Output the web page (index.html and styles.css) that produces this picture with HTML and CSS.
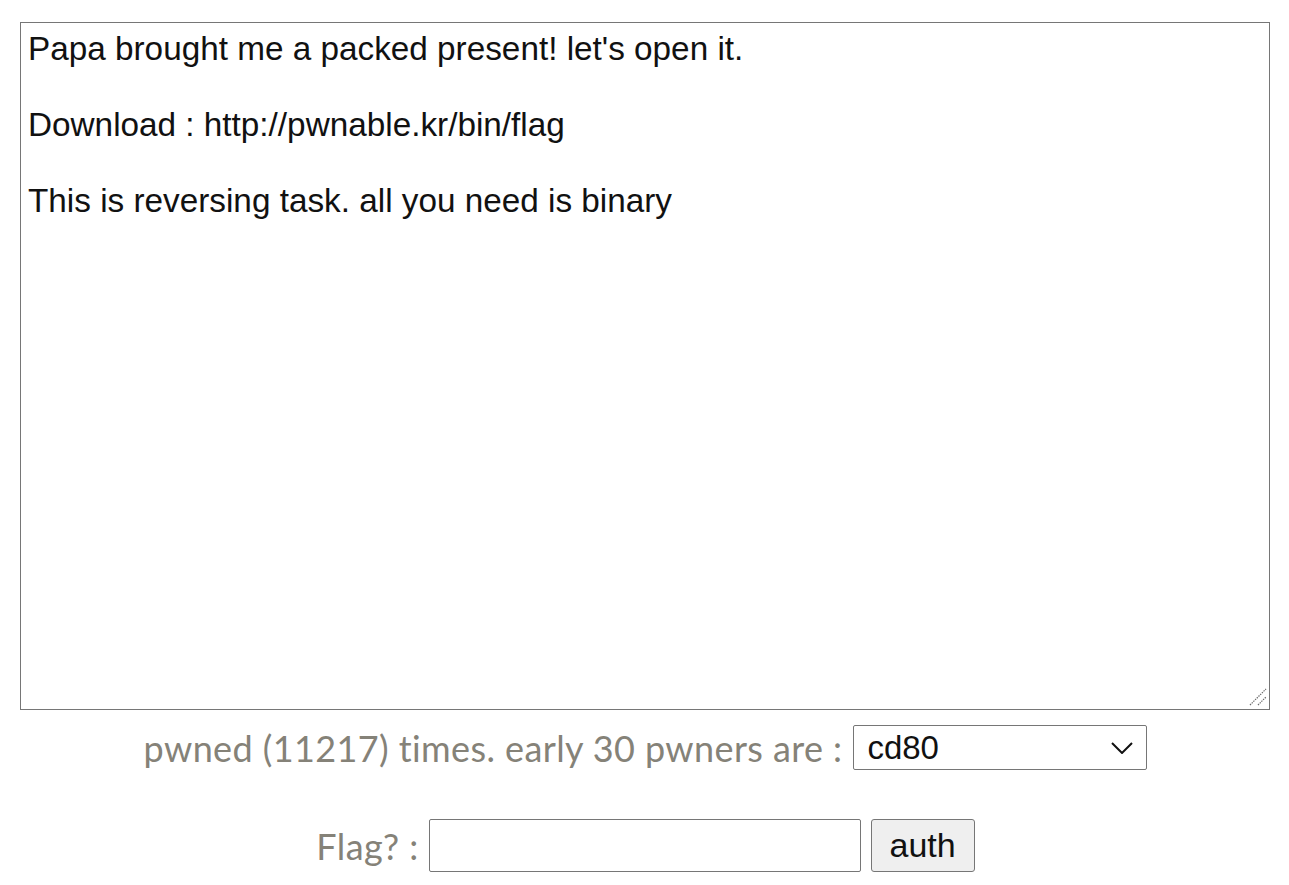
FILE: index.html
```html
<!DOCTYPE html>
<html>
<head>
<meta charset="utf-8">
<link rel="stylesheet" href="styles.css">
</head>
<body>
<div class="page">
<div class="desc-wrap">
<textarea class="desc">Papa brought me a packed present! let's open it.

Download : http://pwnable.kr/bin/flag

This is reversing task. all you need is binary</textarea>
<svg class="grip" width="18" height="18" viewBox="0 0 18 18"><path d="M1 17 L17 1 M9 17 L17 9" fill="none" stroke="#6a6a6a" stroke-width="1.2" stroke-dasharray="1.4 1"/></svg>
</div>
<div class="row pwned-row">
<span class="label">pwned (11217) times. early 30 pwners are :</span>
<div class="select">
<span class="select-text">cd80</span>
<svg class="chev" width="22" height="12" viewBox="0 0 22 12"><path d="M1 1 L11 11 L21 1" fill="none" stroke="#111" stroke-width="2"/></svg>
</div>
</div>
<div class="row flag-row">
<span class="label">Flag? :</span>
<input class="flag-input" type="text">
<button class="auth">auth</button>
</div>
</div>
</body>
</html>
```
FILE: styles.css
```css
html, body {
  margin: 0;
  padding: 0;
  background: #fff;
}
.page {
  display: flex;
  flex-direction: column;
  align-items: center;
  padding-top: 22px;
}
.desc-wrap {
  position: relative;
  width: 1250px;
  height: 688px;
  margin-left: 1px;
}
.desc {
  display: block;
  box-sizing: border-box;
  width: 1250px;
  height: 688px;
  margin: 0;
  border: 1px solid #767676;
  padding: 7px 7px;
  font-family: "Liberation Sans", Arial, sans-serif;
  font-size: 33.3px;
  line-height: 38px;
  color: #111;
  resize: none;
  outline: none;
}
.grip {
  position: absolute;
  right: 3px;
  bottom: 4px;
}
.row {
  display: flex;
  align-items: center;
  justify-content: center;
  margin-left: 2px;
}
.pwned-row {
  margin-top: 15px;
  height: 45px;
}
.flag-row {
  margin-top: 49px;
  height: 53px;
}
.label {
  font-family: Lato, "Open Sans", sans-serif;
  font-size: 36px;
  letter-spacing: 0.4px;
  color: #858278;
  margin-right: 11px;
}
.flag-row .label {
  margin-right: 10px;
}
.select {
  box-sizing: border-box;
  width: 294px;
  height: 45px;
  border: 1px solid #767676;
  border-radius: 2px;
  display: flex;
  align-items: center;
  justify-content: space-between;
  padding: 0 13px 0 13px;
  font-family: "Liberation Sans", Arial, sans-serif;
  font-size: 33px;
  color: #111;
}
.chev {
  display: block;
}
.flag-input {
  box-sizing: border-box;
  width: 432px;
  height: 53px;
  margin: 0;
  border: 1px solid #767676;
  border-radius: 2px;
  padding: 0 6px;
  font-size: 29px;
  outline: none;
}
.auth {
  box-sizing: border-box;
  width: 104px;
  height: 53px;
  margin: 0 0 0 10px;
  border: 1px solid #767676;
  border-radius: 3px;
  background: #efefef;
  font-family: "Liberation Sans", Arial, sans-serif;
  font-size: 34px;
  color: #111;
  padding: 0;
}
```
